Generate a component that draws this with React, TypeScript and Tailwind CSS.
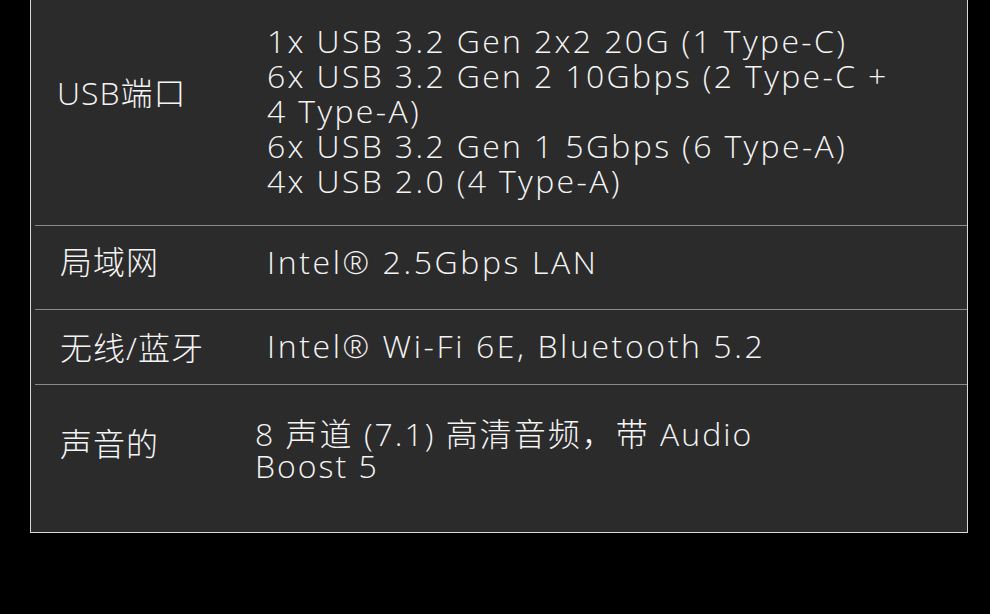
import React from "react";

const font = { fontFamily: '"Open Sans", "Noto Sans CJK SC", sans-serif' };

export default function App() {
  return (
    <div className="h-[614px] w-[990px] bg-black text-[#f4f4f4] font-light" style={font}>
      <div className="ml-[30px] w-[938px] h-[533px] border border-t-0 border-[#d9d9d9] bg-[#2b2b2b] pl-[4px]">
        {/* USB */}
        <div className="flex h-[225px]">
          <div className="w-[232px] pl-[22px] pt-[75px] text-[32px] leading-[35px] tracking-[1px]">USB端口</div>
          <div className="pt-[23px] text-[32px] leading-[35px] tracking-[2.35px] whitespace-nowrap">
            <div>1x USB 3.2 Gen 2x2 20G (1 Type-C)</div>
            <div>6x USB 3.2 Gen 2 10Gbps (2 Type-C +</div>
            <div>4 Type-A)</div>
            <div>6x USB 3.2 Gen 1 5Gbps (6 Type-A)</div>
            <div>4x USB 2.0 (4 Type-A)</div>
          </div>
        </div>
        {/* LAN */}
        <div className="flex h-[84px] border-t border-[#8a8a8a]">
          <div className="w-[232px] pl-[25px] pt-[18px] text-[32px] leading-[35px] tracking-[1px]">局域网</div>
          <div className="pt-[18px] text-[32px] leading-[35px] tracking-[2.6px] whitespace-nowrap">Intel® 2.5Gbps LAN</div>
        </div>
        {/* WiFi */}
        <div className="flex h-[75px] border-t border-[#8a8a8a]">
          <div className="w-[232px] pl-[25px] pt-[20px] text-[32px] leading-[35px] tracking-[1px]">无线/蓝牙</div>
          <div className="pt-[18px] text-[32px] leading-[35px] tracking-[2.6px] whitespace-nowrap">Intel® Wi-Fi 6E, Bluetooth 5.2</div>
        </div>
        {/* Audio */}
        <div className="flex h-[148px] border-t border-[#8a8a8a]">
          <div className="w-[220px] pl-[25px] pt-[41px] text-[32px] leading-[35px] tracking-[1px]">声音的</div>
          <div className="pt-[33px] text-[32px] leading-[32px] tracking-[2px] whitespace-nowrap">
            <div>8 声道 (7.1) 高清音频，带 Audio</div>
            <div>Boost 5</div>
          </div>
        </div>
      </div>
    </div>
  );
}
